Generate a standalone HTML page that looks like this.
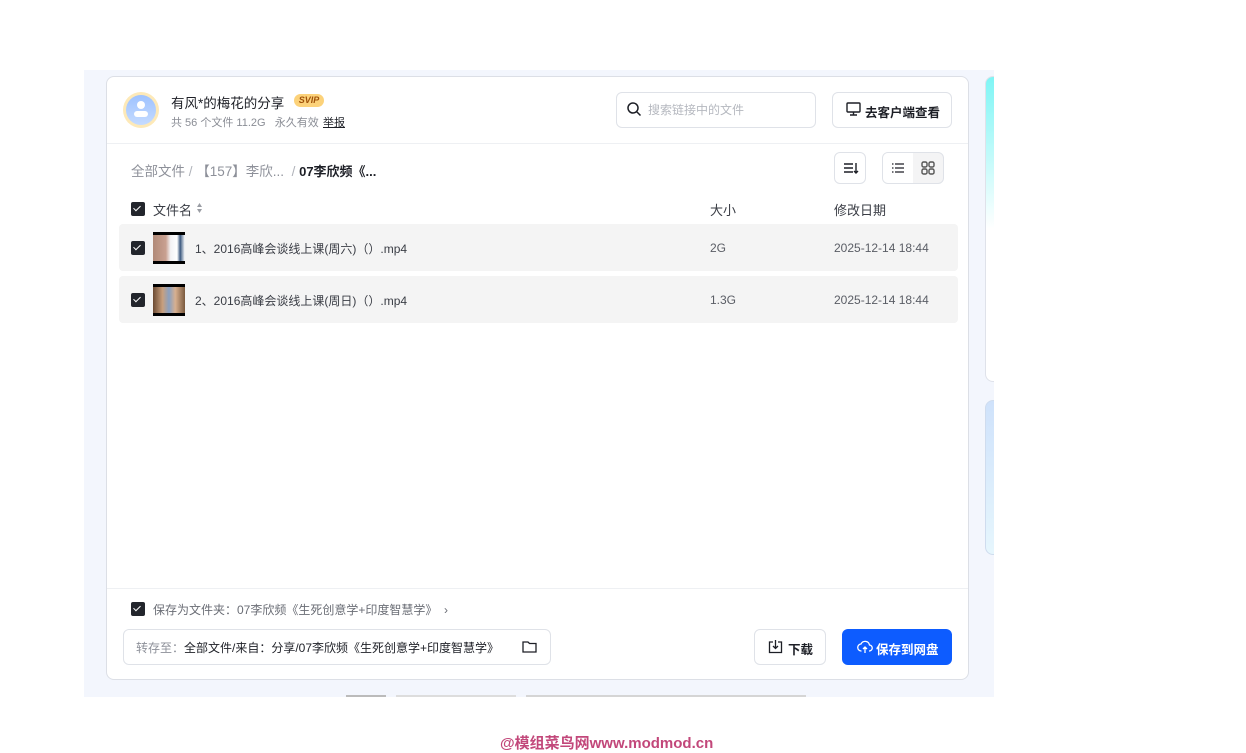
<!DOCTYPE html>
<html><head><meta charset="utf-8"><style>
*{box-sizing:border-box;margin:0;padding:0}
body{width:1246px;height:749px;background:#fff;font-family:"Liberation Sans","Noto Sans CJK SC",sans-serif;position:relative;overflow:hidden;color:#1d1f26}
.bg{position:absolute;left:84px;top:70px;width:910px;height:627px;background:#f3f6fd;overflow:hidden}
.card{position:absolute;left:106px;top:76px;width:863px;height:604px;background:#fff;border:1px solid #dcdfe6;border-radius:8px}
.side1{position:absolute;left:901px;top:6px;width:20px;height:306px;border:1px solid #dfe2ea;border-radius:8px;background:linear-gradient(#7ff5f5,#ffffff 50%,#fff)}
.side2{position:absolute;left:901px;top:330px;width:20px;height:155px;border:1px solid #cfdcee;border-radius:8px;background:linear-gradient(#cfe2fb,#e6f6fd)}
.abs{position:absolute}
.cb{position:absolute;width:14px;height:14px;background:#22252c;border-radius:2px}
.cb:after{content:"";position:absolute;left:4px;top:2px;width:3px;height:6px;border:solid #fff;border-width:0 1.6px 1.6px 0;transform:rotate(45deg)}
.btn{position:absolute;border:1px solid #dfe2e8;border-radius:6px;background:#fff}
.row{position:absolute;left:119px;width:839px;height:47px;background:#f4f4f4;border-radius:4px}
.t{position:absolute;white-space:nowrap}
</style></head><body>
<div class="bg"><div class="side1"></div><div class="side2"></div>
<div class="abs" style="left:262px;top:625px;width:470px;height:2px;overflow:hidden"><div style="display:flex;gap:10px"><div style="width:40px;height:4px;background:#bbb"></div><div style="width:120px;height:4px;background:#ddd"></div><div style="width:280px;height:4px;background:#d5d5d5"></div></div></div>
</div>
<div class="card"></div>
<div class="abs" style="left:123px;top:92px;width:36px;height:36px;border-radius:50%;background:#fde9b8;padding:3px"><div style="width:30px;height:30px;border-radius:50%;background:linear-gradient(#9ec2ff,#c5dbff);position:relative"><div style="position:absolute;left:11px;top:6px;width:8px;height:8px;border-radius:50%;background:#fff"></div><div style="position:absolute;left:8px;top:16px;width:14px;height:6px;border-radius:3px;background:#fff"></div></div></div>
<div class="t" style="left:171px;top:92px;font-size:13.5px;color:#1d1f26">有风*的梅花的分享</div>
<div class="t" style="left:294px;top:94px;width:30px;height:13px;border-radius:7px;background:#fcd27a;color:#a0520a;font-size:9px;font-weight:bold;font-style:italic;text-align:center;line-height:13px">SVIP</div>
<div class="t" style="left:171px;top:114px;font-size:11px;color:#8a8d95">共 56 个文件 11.2G &nbsp; 永久有效</div>
<div class="t" style="left:323px;top:114px;font-size:11px;color:#1d1f26;text-decoration:underline">举报</div>
<div class="btn" style="left:616px;top:92px;width:200px;height:36px"></div>
<svg class="abs" style="left:626px;top:101px" width="16" height="16" viewBox="0 0 16 16"><circle cx="7" cy="7" r="5" fill="none" stroke="#1d1f26" stroke-width="1.5"/><path d="M11 11l3.5 3.5" stroke="#1d1f26" stroke-width="1.5"/></svg>
<div class="t" style="left:648px;top:101px;font-size:12px;color:#b5b8bf">搜索链接中的文件</div>
<div class="btn" style="left:832px;top:92px;width:120px;height:36px"></div>
<svg class="abs" style="left:846px;top:102px" width="15" height="14" viewBox="0 0 15 14"><rect x="1" y="1" width="13" height="9" rx="1" fill="none" stroke="#1d1f26" stroke-width="1.4"/><path d="M4 13h7M7.5 10v3" stroke="#1d1f26" stroke-width="1.4"/></svg>
<div class="t" style="left:865px;top:102px;font-size:12.5px;font-weight:bold;color:#1d1f26">去客户端查看</div>
<div class="abs" style="left:107px;top:143px;width:861px;height:1px;background:#eef0f3"></div>
<div class="t" style="left:131px;top:160px;font-size:13.5px;color:#8d9099">全部文件 <span style="color:#b0b3ba">/</span> 【157】李欣... &nbsp;<span style="color:#b0b3ba">/</span> <b style="color:#1d1f26;font-size:13px">07李欣频《...</b></div>
<div class="btn" style="left:834px;top:152px;width:32px;height:32px"></div>
<svg class="abs" style="left:843px;top:161px" width="16" height="14" viewBox="0 0 16 14"><path d="M1 3h9M1 7h9M1 11h9M13 2v10M11 10l2 2 2-2" stroke="#1d1f26" stroke-width="1.4" fill="none"/></svg>
<div class="btn" style="left:882px;top:152px;width:62px;height:32px;background:#f4f4f5"></div>
<div class="abs" style="left:883px;top:153px;width:30px;height:30px;background:#fff;border-radius:5px 0 0 5px"></div>
<svg class="abs" style="left:891px;top:162px" width="14" height="12" viewBox="0 0 14 12"><path d="M1 2h1.5M4 2h9M1 6h1.5M4 6h9M1 10h1.5M4 10h9" stroke="#1d1f26" stroke-width="1.3"/></svg>
<svg class="abs" style="left:921px;top:161px" width="14" height="14" viewBox="0 0 14 14"><rect x="1" y="1" width="5" height="5" rx="1.5" fill="none" stroke="#555" stroke-width="1.4"/><rect x="8" y="1" width="5" height="5" rx="1.5" fill="none" stroke="#555" stroke-width="1.4"/><rect x="1" y="8" width="5" height="5" rx="1.5" fill="none" stroke="#555" stroke-width="1.4"/><rect x="8" y="8" width="5" height="5" rx="1.5" fill="none" stroke="#555" stroke-width="1.4"/></svg>
<div class="cb" style="left:131px;top:202px"></div>
<div class="t" style="left:153px;top:200px;font-size:13px;color:#3a3d45">文件名</div>
<svg class="abs" style="left:196px;top:202px" width="7" height="12" viewBox="0 0 7 12"><path d="M3.5 1L6 5H1zM3.5 11L6 7H1z" fill="#9a9da4"/></svg>
<div class="t" style="left:710px;top:200px;font-size:13px;color:#3a3d45">大小</div>
<div class="t" style="left:834px;top:200px;font-size:13px;color:#3a3d45">修改日期</div>
<div class="row" style="top:224px"></div>
<div class="row" style="top:276px"></div>
<div class="cb" style="left:131px;top:241px"></div>
<div class="cb" style="left:131px;top:293px"></div>
<div class="abs" style="left:153px;top:232px;width:32px;height:32px;background:#000;padding:3px 0"><div style="width:32px;height:26px;background:linear-gradient(90deg,#b08a78 0,#c9a090 40%,#f3f3f5 55%,#fff 75%,#3d5a80 85%,#fff 100%)"></div></div>
<div class="abs" style="left:153px;top:284px;width:32px;height:32px;background:#000;padding:3px 0"><div style="width:32px;height:26px;background:linear-gradient(90deg,#6a4a33,#c9a07e 30%,#8aa0c0 50%,#d8b090 70%,#7a5a3e)"></div></div>
<div class="t" style="left:195px;top:240px;font-size:12px;color:#3a3d45">1、2016高峰会谈线上课(周六)（）.mp4</div>
<div class="t" style="left:195px;top:292px;font-size:12px;color:#3a3d45">2、2016高峰会谈线上课(周日)（）.mp4</div>
<div class="t" style="left:710px;top:241px;font-size:12px;color:#5a5d65">2G</div>
<div class="t" style="left:710px;top:293px;font-size:12px;color:#5a5d65">1.3G</div>
<div class="t" style="left:834px;top:241px;font-size:12px;color:#5a5d65">2025-12-14 18:44</div>
<div class="t" style="left:834px;top:293px;font-size:12px;color:#5a5d65">2025-12-14 18:44</div>
<div class="abs" style="left:107px;top:588px;width:861px;height:1px;background:#eef0f3"></div>
<div class="cb" style="left:131px;top:602px"></div>
<div class="t" style="left:153px;top:601px;font-size:12px;color:#6a6d75">保存为文件夹：07李欣频《生死创意学+印度智慧学》 &nbsp;›</div>
<div class="btn" style="left:123px;top:629px;width:428px;height:36px"></div>
<div class="t" style="left:136px;top:639px;font-size:12px;color:#8d9099">转存至：<span style="color:#1d1f26">全部文件/来自：分享/07李欣频《生死创意学+印度智慧学》</span></div>
<svg class="abs" style="left:522px;top:640px" width="15" height="13" viewBox="0 0 15 13"><path d="M1 2h5l1.5 1.5H14V12H1z" fill="none" stroke="#1d1f26" stroke-width="1.3"/></svg>
<div class="btn" style="left:754px;top:629px;width:72px;height:36px"></div>
<svg class="abs" style="left:768px;top:639px" width="15" height="15" viewBox="0 0 15 15"><path d="M5 3H1.5v10.5h12V3H10M7.5 1v8M5 7l2.5 2.5L10 7" fill="none" stroke="#1d1f26" stroke-width="1.3"/></svg>
<div class="t" style="left:788px;top:639px;font-size:12.5px;font-weight:bold;color:#1d1f26">下载</div>
<div class="abs" style="left:842px;top:629px;width:110px;height:36px;background:#0d5cff;border-radius:6px"></div>
<svg class="abs" style="left:857px;top:639px" width="16" height="15" viewBox="0 0 16 15"><path d="M4.5 12A3.5 3.5 0 0 1 4 5a4.5 4.5 0 0 1 8.5 1A3 3 0 0 1 12 12M8 8v6M6 10l2-2 2 2" fill="none" stroke="#fff" stroke-width="1.3"/></svg>
<div class="t" style="left:876px;top:639px;font-size:12.5px;font-weight:bold;color:#fff">保存到网盘</div>
<div class="t" style="left:500px;top:732px;font-size:15px;color:#c2477a;font-weight:bold">@模组菜鸟网www.modmod.cn</div>
</body></html>
